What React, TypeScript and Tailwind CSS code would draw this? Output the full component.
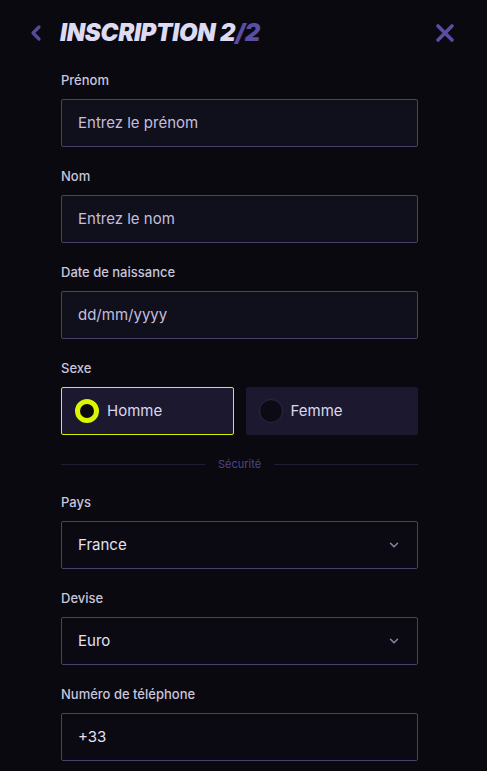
import { ChevronDown } from "lucide-react"

function Field({ label, placeholder, select, filled }: { label: string; placeholder: string; select?: boolean; filled?: boolean }) {
  return (
    <div className="flex flex-col">
      <label className="text-[13px] leading-5 font-medium text-[#c9c5dc] mb-[9px]">{label}</label>
      <div
        className={`h-12 flex items-center justify-between px-4 border border-[#48426a] rounded-[2px] ${
          filled ? "bg-[#100f1c]" : "bg-[#0b0a12]"
        }`}
      >
        <span className={`text-[15px] ${select || !filled ? "text-[#e4e1f0]" : "text-[#c4bfdc]"}`}>{placeholder}</span>
        {select && <ChevronDown size={14} strokeWidth={2.5} className="text-[#8c87a8]" />}
      </div>
    </div>
  )
}

export default function App() {
  return (
    <div className="min-h-[771px] bg-[#0a0910] font-['Inter',sans-serif] pb-8">
      {/* header */}
      <div className="flex items-center justify-between pl-[29px] pr-[32px] pt-[20px] h-[46px]">
        <div className="flex items-center gap-[17px]">
          <svg width="14" height="18" viewBox="0 0 14 18" className="text-[#564b9a]">
            <path d="M10 3 L4 9 L10 15" fill="none" stroke="currentColor" strokeWidth="3.2" strokeLinecap="round" strokeLinejoin="round" />
          </svg>
          <h1 className="text-[24px] font-black italic tracking-[-0.3px] text-[#dedaf2] leading-none">
            INSCRIPTION 2<span className="text-[#5a4ea3]">/2</span>
          </h1>
        </div>
        <svg width="20" height="20" viewBox="0 0 20 20" className="text-[#5a4ea3]">
          <path d="M3 3 L17 17 M17 3 L3 17" stroke="currentColor" strokeWidth="3.6" strokeLinecap="round" />
        </svg>
      </div>

      <div className="ml-[61px] w-[357px] mt-[24px] flex flex-col gap-[19px]">
        <Field label="Prénom" placeholder="Entrez le prénom" filled />
        <Field label="Nom" placeholder="Entrez le nom" filled />
        <Field label="Date de naissance" placeholder="dd/mm/yyyy" filled />

        <div className="flex flex-col">
          <label className="text-[13px] leading-5 font-medium text-[#c9c5dc] mb-[9px]">Sexe</label>
          <div className="grid grid-cols-2 gap-3">
            <div className="h-12 flex items-center gap-2 px-[13px] bg-[#1b1830] border border-[#d8f200] rounded-[2px]">
              <span className="w-6 h-6 rounded-full border-[5px] border-[#dcf500] bg-[#0a0910]" />
              <span className="text-[15px] text-[#dcd8ef]">Homme</span>
            </div>
            <div className="h-12 flex items-center gap-2 px-[13px] bg-[#1b1830] rounded-[2px]">
              <span className="w-6 h-6 rounded-full border border-[#2c2946] bg-[#0c0b14]" />
              <span className="text-[15px] text-[#dcd8ef]">Femme</span>
            </div>
          </div>
        </div>

        <div className="flex items-center gap-[13px] h-4 mt-[2px] mb-[1px]">
          <div className="flex-1 h-px bg-[#1f1c36]" />
          <span className="text-[11px] text-[#4d4785]">Sécurité</span>
          <div className="flex-1 h-px bg-[#1f1c36]" />
        </div>

        <Field label="Pays" placeholder="France" select />
        <Field label="Devise" placeholder="Euro" select />
        <Field label="Numéro de téléphone" placeholder="+33" />
      </div>
    </div>
  )
}
